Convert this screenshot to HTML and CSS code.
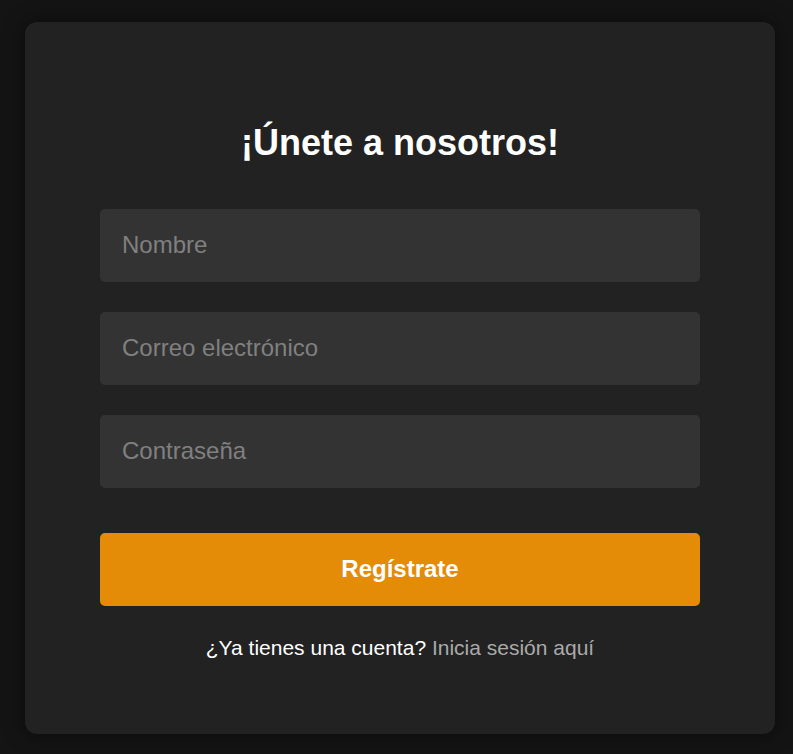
FILE: index.html
```html
<!DOCTYPE html>
<html lang="es">
<head>
<meta charset="utf-8">
<link rel="stylesheet" href="styles.css">
</head>
<body>
<div class="card">
  <h1 class="title">¡Únete a nosotros!</h1>
  <form class="form">
    <input class="field" type="text" placeholder="Nombre">
    <input class="field" type="email" placeholder="Correo electrónico">
    <input class="field" type="password" placeholder="Contraseña">
    <button class="submit" type="button">Regístrate</button>
  </form>
  <p class="footer">¿Ya tienes una cuenta? <a class="link" href="#">Inicia sesión aquí</a></p>
</div>
</body>
</html>
```
FILE: styles.css
```css
html, body {
  margin: 0;
  padding: 0;
  background: #141414;
  font-family: "Liberation Sans", Arial, sans-serif;
}
body {
  padding: 22px 18px 20px 25px;
}
.card {
  width: 750px;
  height: 712px;
  box-sizing: border-box;
  background: #222222;
  border-radius: 12px;
  box-shadow: 0 0 20px rgba(0, 0, 0, 0.5);
  padding: 100px 75px 0;
}
.title {
  margin: 0;
  color: #ffffff;
  font-size: 36px;
  font-weight: bold;
  text-align: center;
  line-height: 42px;
}
.form {
  margin-top: 45px;
  display: flex;
  flex-direction: column;
  gap: 30px;
}
.field {
  height: 73px;
  box-sizing: border-box;
  border: none;
  border-radius: 5px;
  background: #333333;
  padding: 0 22px 2px;
  font-family: "Liberation Sans", Arial, sans-serif;
  font-size: 24px;
  color: #ffffff;
  outline: none;
}
.field::placeholder {
  color: #808080;
}
.submit {
  margin-top: 15px;
  height: 73px;
  border: none;
  border-radius: 5px;
  background: #e48b08;
  color: #ffffff;
  padding: 0 0 2px;
  font-family: "Liberation Sans", Arial, sans-serif;
  font-size: 24px;
  font-weight: bold;
}
.footer {
  margin: 30px 0 0;
  text-align: center;
  color: #ffffff;
  font-size: 21px;
  line-height: 24px;
}
.link {
  color: #aaaaaa;
  text-decoration: none;
}
```
